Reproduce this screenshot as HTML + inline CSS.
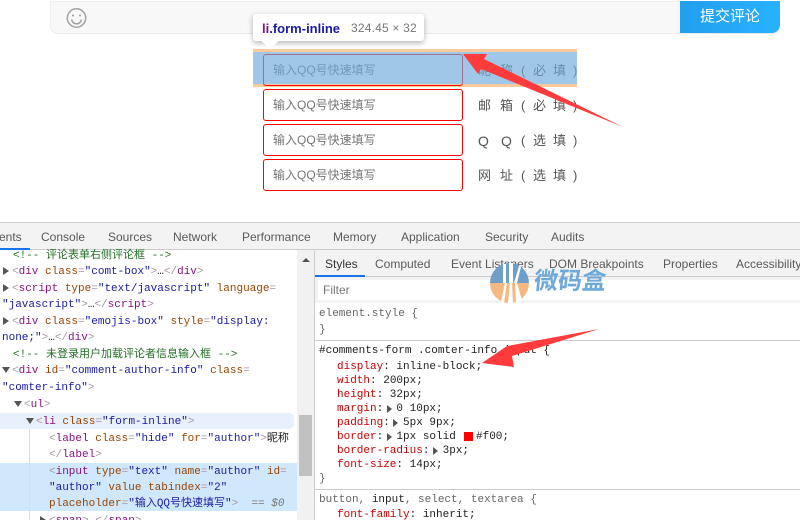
<!DOCTYPE html>
<html><head><meta charset="utf-8">
<style>
html,body{margin:0;padding:0;background:#fff}
#r{position:relative;width:800px;height:520px;overflow:hidden;background:#fff;font-family:"Liberation Sans","Noto Sans CJK SC",sans-serif}
#r div,#r span.a{position:absolute}
.b{box-sizing:border-box}
.inp{left:263px;width:200px;height:32px;box-sizing:border-box;border:1px solid #f00;border-radius:3px;font-size:12px;line-height:31px;padding-left:9px;color:#757575;white-space:nowrap}
.lb{font-size:13px;line-height:16px;color:#555;white-space:nowrap}
.t{font-size:12px;line-height:16px;color:#5a5a5a;white-space:nowrap;top:229px}
.s{font-size:12px;line-height:16px;color:#5a5a5a;white-space:nowrap;top:256px}
.m{font-family:"Liberation Mono","Noto Sans CJK SC",monospace;font-size:11px;line-height:14px;white-space:pre;color:#222;margin-top:1px}
.g{color:#a894a6}.p{color:#881280}.n{color:#994500}.v{color:#1a1aa6}.c{color:#236e25}
.k{color:#c80000}.d{color:#888}
.tri{width:0;height:0;border-left:6px solid #555;border-top:4px solid transparent;border-bottom:4px solid transparent}
.trd{width:0;height:0;border-top:6px solid #555;border-left:4px solid transparent;border-right:4px solid transparent}
.tr2{width:0;height:0;border-left:5px solid #555;border-top:4px solid transparent;border-bottom:4px solid transparent}
</style></head><body><div id="r">

<!-- comment box -->
<div class="b" style="left:50px;top:1px;width:730px;height:33px;background:#f8f8f8;border:1px solid #eee;border-right:0;border-bottom:1px solid #eaeaea;border-radius:0 0 8px 8px"></div>
<div style="left:680px;top:1px;width:100px;height:32px;background:linear-gradient(90deg,#219fee,#27b2ff);border-radius:0 0 8px 0;color:#fff;font-size:15px;line-height:32px;text-align:center">提交评论</div>
<svg style="position:absolute;left:65px;top:7px" width="23" height="23" viewBox="0 0 23 23" fill="none" stroke="#a2a2a2" stroke-width="1.5"><circle cx="11.5" cy="11" r="9.2"/><path d="M6.5 12.5c1 3.2 3 4.4 5 4.4s4-1.2 5-4.4"/><circle cx="8" cy="8.5" r="1" fill="#999" stroke="none"/><circle cx="15" cy="8.5" r="1" fill="#999" stroke="none"/></svg>

<!-- highlight -->
<div style="left:253px;top:49px;width:324px;height:38px;background:#f9cb9c"></div>
<div style="left:253px;top:52px;width:324px;height:32px;background:#fff"></div>

<!-- labels -->
<div class="lb" style="left:478px;top:63px">昵</div><div class="lb" style="left:500px;top:63px">称</div>
<div class="lb" style="left:521px;top:63px">(</div><div class="lb" style="left:533px;top:63px">必</div><div class="lb" style="left:553px;top:63px">填</div><div class="lb" style="left:573px;top:63px">)</div>
<div class="lb" style="left:478px;top:98px">邮</div><div class="lb" style="left:500px;top:98px">箱</div>
<div class="lb" style="left:521px;top:98px">(</div><div class="lb" style="left:533px;top:98px">必</div><div class="lb" style="left:553px;top:98px">填</div><div class="lb" style="left:573px;top:98px">)</div>
<div class="lb" style="left:478px;top:133px;font-size:14px">Q</div><div class="lb" style="left:501px;top:133px;font-size:14px">Q</div>
<div class="lb" style="left:521px;top:133px">(</div><div class="lb" style="left:533px;top:133px">选</div><div class="lb" style="left:553px;top:133px">填</div><div class="lb" style="left:573px;top:133px">)</div>
<div class="lb" style="left:478px;top:168px">网</div><div class="lb" style="left:500px;top:168px">址</div>
<div class="lb" style="left:521px;top:168px">(</div><div class="lb" style="left:533px;top:168px">选</div><div class="lb" style="left:553px;top:168px">填</div><div class="lb" style="left:573px;top:168px">)</div>

<!-- inputs -->
<div class="inp" style="top:54px">输入QQ号快速填写</div>
<div class="inp" style="top:89px">输入QQ号快速填写</div>
<div class="inp" style="top:124px">输入QQ号快速填写</div>
<div class="inp" style="top:159px">输入QQ号快速填写</div>
<div style="left:253px;top:52px;width:324px;height:32px;background:rgba(111,168,220,.66)"></div>

<!-- tooltip -->
<div style="left:253px;top:14px;width:171px;height:27px;background:#fff;border-radius:3px;box-shadow:0 2px 6px rgba(0,0,0,.3)"></div>
<div style="left:264px;top:35px;width:12px;height:12px;background:#fff;transform:rotate(45deg)"></div>
<div style="left:262px;top:21px;font-size:13px;line-height:15px;font-weight:bold;white-space:nowrap;color:#1a1aa6"><span style="color:#881280">li</span>.form-inline</div>
<div style="left:351px;top:21px;font-size:12px;line-height:15px;color:#777;white-space:nowrap;letter-spacing:.2px">324.45 × 32</div>

<!-- devtools frame -->
<div style="left:0;top:222px;width:800px;height:298px;background:#fff"></div>
<div style="left:0;top:222px;width:800px;height:28px;background:#f3f3f3;border-top:1px solid #ccc;border-bottom:1px solid #ccc;box-sizing:border-box"></div>
<div style="left:0;top:248px;width:30px;height:2px;background:#1a73e8"></div>
<div class="t" style="left:-1px">ents</div>
<div class="t" style="left:41px">Console</div>
<div class="t" style="left:108px">Sources</div>
<div class="t" style="left:173px">Network</div>
<div class="t" style="left:242px">Performance</div>
<div class="t" style="left:333px">Memory</div>
<div class="t" style="left:401px">Application</div>
<div class="t" style="left:485px">Security</div>
<div class="t" style="left:551px">Audits</div>

<!-- left pane -->
<div style="left:0;top:413px;width:294px;height:16px;background:#e8f0fb;border-radius:0 5px 5px 0"></div>
<div style="left:0;top:463px;width:297px;height:48px;background:#cfe8fc"></div>
<div style="left:29px;top:429px;width:1px;height:91px;background:#ddd"></div>
<div style="left:297px;top:250px;width:17px;height:270px;background:#f1f1f1"></div>
<div style="left:299px;top:415px;width:13px;height:61px;background:#c1c1c1"></div>
<div style="left:302px;top:258px;width:0;height:0;border-bottom:4px solid #505050;border-left:4px solid transparent;border-right:4px solid transparent"></div>
<div style="left:314px;top:250px;width:1px;height:270px;background:#ccc"></div>

<div class="m c" style="left:13px;top:248px">&lt;!-- 评论表单右侧评论框 --&gt;</div>
<div class="tri" style="left:3px;top:267px"></div>
<div class="m" style="left:12px;top:264px"><span class="g">&lt;</span><span class="p">div</span> <span class="n">class</span><span class="g">=</span><span class="v">"comt-box"</span><span class="g">&gt;</span>…<span class="g">&lt;/</span><span class="p">div</span><span class="g">&gt;</span></div>
<div class="tri" style="left:3px;top:284px"></div>
<div class="m" style="left:12px;top:281px"><span class="g">&lt;</span><span class="p">script</span> <span class="n">type</span><span class="g">=</span><span class="v">"text/javascript"</span> <span class="n">language</span><span class="g">=</span></div>
<div class="m" style="left:2px;top:297px"><span class="v">"javascript"</span><span class="g">&gt;</span>…<span class="g">&lt;/</span><span class="p">script</span><span class="g">&gt;</span></div>
<div class="tri" style="left:3px;top:317px"></div>
<div class="m" style="left:12px;top:314px"><span class="g">&lt;</span><span class="p">div</span> <span class="n">class</span><span class="g">=</span><span class="v">"emojis-box"</span> <span class="n">style</span><span class="g">=</span><span class="v">"display:</span></div>
<div class="m" style="left:2px;top:330px"><span class="v">none;"</span><span class="g">&gt;</span>…<span class="g">&lt;/</span><span class="p">div</span><span class="g">&gt;</span></div>
<div class="m c" style="left:13px;top:347px">&lt;!-- 未登录用户加载评论者信息输入框 --&gt;</div>
<div class="trd" style="left:2px;top:367px"></div>
<div class="m" style="left:12px;top:363px"><span class="g">&lt;</span><span class="p">div</span> <span class="n">id</span><span class="g">=</span><span class="v">"comment-author-info"</span> <span class="n">class</span><span class="g">=</span></div>
<div class="m" style="left:2px;top:380px"><span class="v">"comter-info"</span><span class="g">&gt;</span></div>
<div class="trd" style="left:14px;top:401px"></div>
<div class="m" style="left:24px;top:397px"><span class="g">&lt;</span><span class="p">ul</span><span class="g">&gt;</span></div>
<div class="trd" style="left:26px;top:418px"></div>
<div class="m" style="left:36px;top:414px"><span class="g">&lt;</span><span class="p">li</span> <span class="n">class</span><span class="g">=</span><span class="v">"form-inline"</span><span class="g">&gt;</span></div>
<div class="m" style="left:49px;top:431px"><span class="g">&lt;</span><span class="p">label</span> <span class="n">class</span><span class="g">=</span><span class="v">"hide"</span> <span class="n">for</span><span class="g">=</span><span class="v">"author"</span><span class="g">&gt;</span>昵称</div>
<div class="m" style="left:49px;top:447px"><span class="g">&lt;/</span><span class="p">label</span><span class="g">&gt;</span></div>
<div class="m" style="left:49px;top:464px"><span class="g">&lt;</span><span class="p">input</span> <span class="n">type</span><span class="g">=</span><span class="v">"text"</span> <span class="n">name</span><span class="g">=</span><span class="v">"author"</span> <span class="n">id</span><span class="g">=</span></div>
<div class="m" style="left:49px;top:480px"><span class="v">"author"</span> <span class="n">value</span> <span class="n">tabindex</span><span class="g">=</span><span class="v">"2"</span></div>
<div class="m" style="left:49px;top:496px"><span class="n">placeholder</span><span class="g">=</span><span class="v">"输入QQ号快速填写"</span><span class="g">&gt;</span> <span style="color:#777"> == <i>$0</i></span></div>
<div class="tri" style="left:40px;top:516px"></div>
<div class="m" style="left:49px;top:513px"><span class="g">&lt;</span><span class="p">span</span><span class="g">&gt;</span>…<span class="g">&lt;/</span><span class="p">span</span><span class="g">&gt;</span></div>

<!-- right pane -->
<div style="left:315px;top:250px;width:485px;height:27px;background:#f3f3f3;border-bottom:1px solid #ccc;box-sizing:border-box"></div>
<div style="left:315px;top:275px;width:50px;height:2px;background:#1a73e8"></div>
<div class="s" style="left:325px;color:#333">Styles</div>
<div class="s" style="left:375px">Computed</div>
<div class="s" style="left:451px">Event Listeners</div>
<div class="s" style="left:549px">DOM Breakpoints</div>
<div class="s" style="left:663px">Properties</div>
<div class="s" style="left:736px">Accessibility</div>
<div style="left:315px;top:277px;width:485px;height:26px;background:#f3f3f3"></div>
<div style="left:318px;top:280px;width:482px;height:20px;background:#fff"></div>
<div style="left:323px;top:283px;font-size:12px;line-height:15px;color:#777">Filter</div>
<div class="m" style="left:319px;top:306px;color:#666">element.style {</div>
<div class="m" style="left:319px;top:322px;color:#666">}</div>
<div style="left:315px;top:340px;width:485px;height:1px;background:#ccc"></div>
<div class="m" style="left:319px;top:343px">#comments-form .comter-info input {</div>
<div class="m" style="left:337px;top:359px"><span class="k">display</span>: inline-block;</div>
<div class="m" style="left:337px;top:373px"><span class="k">width</span>: 200px;</div>
<div class="m" style="left:337px;top:387px"><span class="k">height</span>: 32px;</div>
<div class="m" style="left:337px;top:401px"><span class="k">margin</span>:  0 10px;</div>
<div class="tr2" style="left:387px;top:405px"></div>
<div class="m" style="left:337px;top:415px"><span class="k">padding</span>:  5px 9px;</div>
<div class="tr2" style="left:393px;top:419px"></div>
<div class="m" style="left:337px;top:429px"><span class="k">border</span>:  1px solid</div>
<div class="tr2" style="left:387px;top:433px"></div>
<div style="left:464px;top:432px;width:9px;height:9px;background:#f00"></div>
<div class="m" style="left:476px;top:429px">#f00;</div>
<div class="m" style="left:337px;top:443px"><span class="k">border-radius</span>:  3px;</div>
<div class="tr2" style="left:433px;top:447px"></div>
<div class="m" style="left:337px;top:457px"><span class="k">font-size</span>: 14px;</div>
<div class="m" style="left:319px;top:471px;color:#666">}</div>
<div style="left:315px;top:489px;width:485px;height:1px;background:#ccc"></div>
<div class="m" style="left:319px;top:492px;color:#666">button, <span style="color:#222">input</span>, select, textarea {</div>
<div class="m" style="left:337px;top:507px"><span class="k">font-family</span>: inherit;</div>

<!-- watermark -->
<svg style="position:absolute;left:489px;top:262px" width="41" height="42" viewBox="0 0 41 42">
<path d="M1 21a19.5 20 0 0 1 39 0z" fill="#6f9fc9"/>
<path d="M1 21a19.5 20 0 0 0 39 0z" fill="#f4b983"/>
<path d="M14 2h3v19h-3zM20 1h4v20h-4zM30 4l2 1-4 16h-3z" fill="#fff"/>
<path d="M12 40l4-19h2l-3 20zM19 41l2-20h2l1 20zM27 41l-1-20h2l5 17z" fill="#fff"/>
</svg>
<div style="left:534px;top:268px;font-size:24px;line-height:28px;font-weight:bold;color:#6ea9da;white-space:nowrap;transform:skewX(-6deg)">微码盒</div>

<!-- arrows -->
<svg style="position:absolute;left:0;top:0" width="800" height="520" viewBox="0 0 800 520">
<polygon points="463,54 487,54 484,59 623,127 481,69 478,74" fill="#ff3b3b"/>
<polygon points="599,329 507,346 482,363 514,367 512,356" fill="#ff3b3b"/>
</svg>
</div></body></html>
